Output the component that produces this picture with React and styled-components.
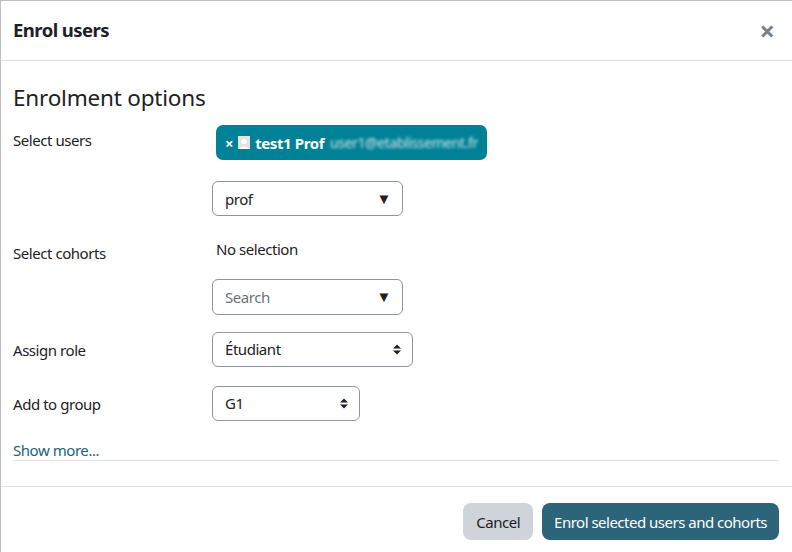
import React from "react";
import styled, { createGlobalStyle } from "styled-components";

const FONT = `"Noto Sans", "Liberation Sans", sans-serif`;

const Global = createGlobalStyle`
  html, body { margin: 0; padding: 0; background: #fff; }
  body { font-family: ${FONT}; font-size: 15px; color: #1d2125; letter-spacing: -0.45px; }
  * { box-sizing: border-box; }
`;

const Modal = styled.div`
  width: 792px;
  height: 552px;
  display: flex;
  flex-direction: column;
  background: #fff;
  border-left: 1px solid rgba(0,0,0,0.25);
  border-top: 1px solid rgba(0,0,0,0.25);
  overflow: hidden;
`;

const Header = styled.div`
  height: 60px;
  flex: none;
  display: flex;
  align-items: center;
  justify-content: space-between;
  padding: 0 17px 0 12px;
  border-bottom: 1px solid #dee2e6;
`;

const Title = styled.h5`
  margin: 0;
  font-size: 18.5px;
  font-weight: 700;
  line-height: 1.2;
  letter-spacing: -0.55px;
  color: #1d2125;
`;

const Close = styled.button`
  border: none;
  background: none;
  padding: 0;
  font-family: ${FONT};
  font-size: 27px;
  font-weight: 700;
  line-height: 1;
  color: #7b8087;
  cursor: pointer;
`;

const Body = styled.div`
  flex: 1;
  padding: 23px 13px 0 12px;
  display: flex;
  flex-direction: column;
`;

const Heading = styled.h3`
  margin: 0 0 11px;
  font-size: 22.5px;
  font-weight: 400;
  line-height: 27px;
  letter-spacing: -0.2px;
  color: #1d2125;
`;

const Row = styled.div`
  display: grid;
  grid-template-columns: 199px 1fr;
  margin-bottom: ${(p) => p.$mb || 0}px;
`;

const Label = styled.div`
  padding-top: ${(p) => p.$pt ?? 7}px;
  line-height: 22.5px;
`;

const Field = styled.div`
  display: flex;
  flex-direction: column;
  align-items: flex-start;
`;

const Chip = styled.span`
  margin: 3px 0 0 4px;
  height: 35px;
  width: 271px;
  display: flex;
  align-items: center;
  padding: 0 9px;
  background: #008196;
  color: #fff;
  border-radius: 7px;
  font-weight: 700;
  font-size: 15px;
  letter-spacing: -0.4px;
  white-space: nowrap;
`;

const ChipX = styled.span`
  font-size: 15px;
  margin-right: 5px;
`;

const Avatar = styled.span`
  flex: none;
  width: 12px;
  height: 13px;
  background: #e3e3e3;
  display: inline-flex;
  align-items: flex-end;
  justify-content: center;
  margin-right: 5px;
  overflow: hidden;
`;

const Blurred = styled.span`
  margin-left: 6px;
  font-weight: 400;
  font-size: 14px;
  color: #cfe6ea;
  filter: blur(1.4px);
`;

const Combo = styled.div`
  margin-top: ${(p) => p.$mt || 0}px;
  width: ${(p) => p.$w}px;
  height: ${(p) => p.$h || 35}px;
  border: 1px solid #8f959e;
  border-radius: 6px;
  display: flex;
  align-items: center;
  justify-content: space-between;
  padding: 0 11px 0 12px;
  color: ${(p) => (p.$placeholder ? "#6a737b" : "#1d2125")};
  background: #fff;
`;

const Arrow = styled.span`
  font-size: 15px;
  color: #1d2125;
  line-height: 1;
`;

const Plain = styled.div`
  margin: 3px 0 0 4px;
  line-height: 22.5px;
`;

const ShowMore = styled.div`
  margin-top: 19px;
  height: 21px;
  line-height: 21px;
  border-bottom: 1px solid #dee2e6;
  color: #23617a;
`;

const Footer = styled.div`
  flex: none;
  height: 66px;
  border-top: 1px solid #dee2e6;
  display: flex;
  justify-content: flex-end;
  align-items: flex-start;
  gap: 9px;
  padding: 16px 13px 0 0;
`;

const Button = styled.button`
  height: 37px;
  padding: 0 ${(p) => (p.$primary ? 12 : 13)}px;
  border: none;
  border-radius: 8px;
  font-family: ${FONT};
  font-size: 15px;
  letter-spacing: -0.5px;
  background: ${(p) => (p.$primary ? "#2c6479" : "#ced4da")};
  color: ${(p) => (p.$primary ? "#fff" : "#1d2125")};
  cursor: pointer;
`;

const Updown = () => (
  <svg width="8" height="11" viewBox="0 0 8 11">
    <path d="M0 4.5 L4 0.5 L8 4.5 Z M0 6.5 L4 10.5 L8 6.5 Z" fill="#1d2125" />
  </svg>
);

const Person = () => (
  <svg width="12" height="12" viewBox="0 0 12 12">
    <circle cx="6" cy="4.5" r="2.6" fill="#fff" />
    <path d="M1.5 12 C1.5 8.5 10.5 8.5 10.5 12 Z" fill="#fff" />
  </svg>
);

export default function App() {
  return (
    <>
      <Global />
      <Modal>
        <Header>
          <Title>Enrol users</Title>
          <Close aria-label="Close">×</Close>
        </Header>
        <Body>
          <Heading>Enrolment options</Heading>
          <Row $mb={19}>
            <Label>Select users</Label>
            <Field>
              <Chip>
                <ChipX>×</ChipX>
                <Avatar>
                  <Person />
                </Avatar>
                test1 Prof
                <Blurred>user1@etablissement.fr</Blurred>
              </Chip>
              <Combo $mt={21} $w={191}>
                prof
                <Arrow>▼</Arrow>
              </Combo>
            </Field>
          </Row>
          <Row $mb={17}>
            <Label>Select cohorts</Label>
            <Field>
              <Plain>No selection</Plain>
              <Combo $mt={18} $w={191} $h={36} $placeholder>
                Search
                <Arrow>▼</Arrow>
              </Combo>
            </Field>
          </Row>
          <Row $mb={19}>
            <Label>Assign role</Label>
            <Field>
              <Combo $w={201}>
                Étudiant
                <Updown />
              </Combo>
            </Field>
          </Row>
          <Row>
            <Label>Add to group</Label>
            <Field>
              <Combo $w={148}>
                G1
                <Updown />
              </Combo>
            </Field>
          </Row>
          <ShowMore>Show more...</ShowMore>
        </Body>
        <Footer>
          <Button>Cancel</Button>
          <Button $primary>Enrol selected users and cohorts</Button>
        </Footer>
      </Modal>
    </>
  );
}
